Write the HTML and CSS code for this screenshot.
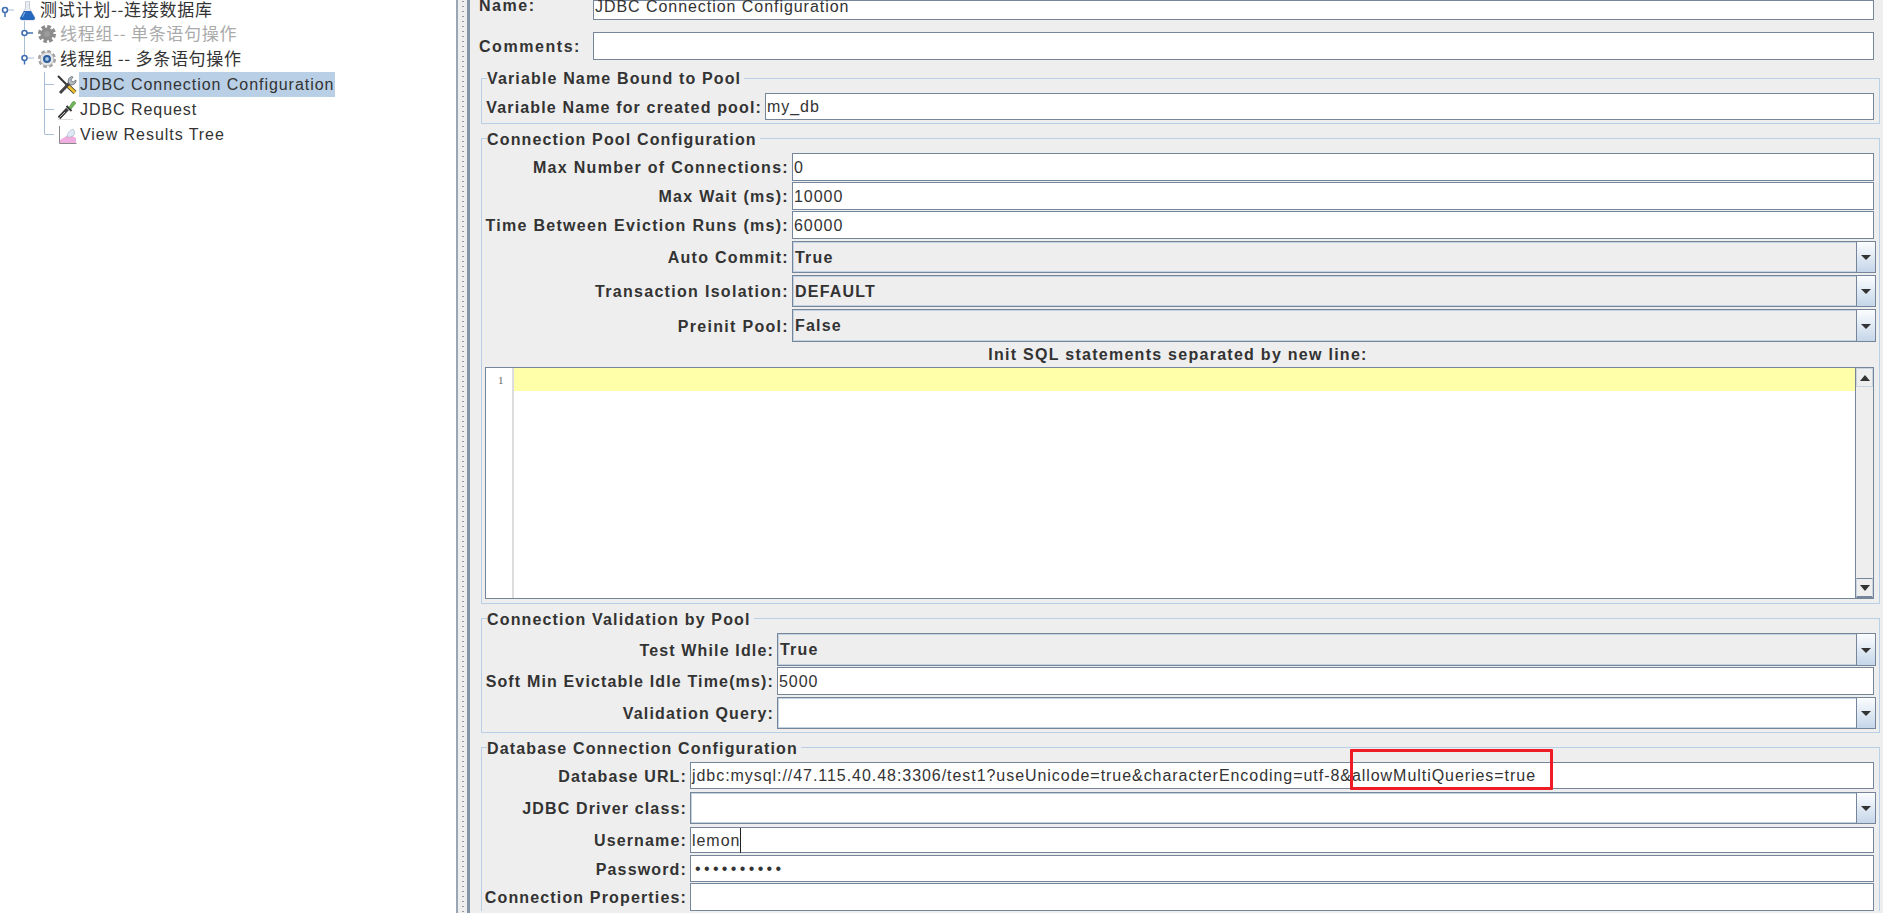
FILE: index.html
```html
<!DOCTYPE html>
<html lang="zh">
<head>
<meta charset="utf-8">
<title>JDBC Connection Configuration</title>
<link rel="stylesheet" href="styles.css">
</head>
<body>
<div class="app">
  <nav class="tree">
    <div class="node n0">
      <svg class="conn c0" viewBox="0 0 19 21"><circle cx="5" cy="10" r="2.5" fill="none" stroke="#3f6fb0" stroke-width="1.6"/><path d="M5 13v4" stroke="#3f6fb0" stroke-width="1.5"/><path d="M8 10h6" stroke="#a9bfd8"/></svg>
      <svg class="icon" viewBox="0 0 18 20"><path d="M6.500 0h4v7l5.500 10q0 2-2 2H3q-2 0-2-2l5.500-10z" fill="#e9edf2" stroke="#aab4c0" stroke-width=".6"/><path d="M5 10h7l4 7q0 2-2 2H3q-2 0-2-2z" fill="#2467bd"/><path d="M6 11l-2.500 5" stroke="#8fb9ea"/></svg>
      <span class="txt cjk">测试计划--连接数据库</span>
    </div>
    <div class="node n1">
      <svg class="conn c1" viewBox="0 0 37 25"><path d="M24.500 0v25" stroke="#a9bfd8"/><circle cx="24.500" cy="12" r="2.500" fill="#fff" stroke="#3f6fb0" stroke-width="1.600"/><path d="M27 12h6" stroke="#3f6fb0" stroke-width="1.500"/></svg>
      <svg class="icon gear" viewBox="0 0 20 20"><circle cx="10" cy="10" r="7" fill="none" stroke="#8c8c8c" stroke-width="4" stroke-dasharray="3.400 2.100"/><circle cx="10" cy="10" r="6.500" fill="#8c8c8c"/><circle cx="10" cy="10" r="3" fill="#9c9c9c"/></svg>
      <span class="txt cjk off">线程组-- 单条语句操作</span>
    </div>
    <div class="node n1">
      <svg class="conn c1" viewBox="0 0 37 25"><path d="M24.500 0v12" stroke="#a9bfd8"/><circle cx="24.500" cy="12" r="2.500" fill="#fff" stroke="#3f6fb0" stroke-width="1.600"/><path d="M24.500 14.500v4" stroke="#3f6fb0" stroke-width="1.500"/><path d="M28 12h6" stroke="#a9bfd8"/></svg>
      <svg class="icon gear" viewBox="0 0 20 20"><circle cx="10" cy="10" r="7" fill="none" stroke="#a4a4a4" stroke-width="4" stroke-dasharray="3.400 2.100"/><circle cx="10" cy="10" r="6.800" fill="#e6e6e6" stroke="#a4a4a4" stroke-width=".6"/><circle cx="10" cy="10" r="4" fill="#2c5f9e"/><circle cx="10" cy="10" r="1.900" fill="#a9c4e4"/></svg>
      <span class="txt cjk">线程组 -- 多条语句操作</span>
    </div>
    <div class="node n2 first">
      <svg class="conn c2" viewBox="0 0 57 25"><path d="M44.500 0v25M45 12.500h9" stroke="#a9bfd8"/></svg>
      <svg class="icon" viewBox="0 0 20 20"><path d="M1 1l9 9" stroke="#333" stroke-width="2"/><path d="M9.500 9.500l8.500 8" stroke="#333" stroke-width="4.400"/><path d="M9.500 9.500l8.500 8" stroke="#eec22c" stroke-width="2.800"/><path d="M3 18L13 7.500" stroke="#444" stroke-width="3"/><path d="M11.500 8.500q-1.500-5 3-7l1.500.5-2.200 3 2.200 2.200 3-2.200q.3 4.500-4.700 5z" fill="#b4bcc4" stroke="#4c5560" stroke-width=".7"/></svg>
      <span class="txt sel">JDBC Connection Configuration</span>
    </div>
    <div class="node n2">
      <svg class="conn c2" viewBox="0 0 57 25"><path d="M44.500 0v25M45 12.500h9" stroke="#a9bfd8"/></svg>
      <svg class="icon" viewBox="0 0 20 20"><path d="M2 18L10.500 9" stroke="#3a3a3a" stroke-width="3.600"/><path d="M2.500 17.500L8 12" stroke="#b9c2c8" stroke-width="1"/><path d="M9.500 6l5 5" stroke="#333" stroke-width="2"/><path d="M12 7.500l3.500-5.500q3-1.500 3 1.500l-4.500 5.500z" fill="#72b85a" stroke="#3e7a30" stroke-width=".6"/><path d="M1 19.500h15" stroke="#ddd"/></svg>
      <span class="txt">JDBC Request</span>
    </div>
    <div class="node n2">
      <svg class="conn c2" viewBox="0 0 57 25"><path d="M44.500 0v12.500M45 12.500h9" stroke="#a9bfd8"/></svg>
      <svg class="icon" viewBox="0 0 20 20"><path d="M2.500 1v17.500h17" fill="none" stroke="#8a8a8a"/><path d="M3 18v-3l5-3 4-3 7 4v5z" fill="#f0aee0"/><path d="M10 12q.5-6 6-8 3 3 1 6-3 3-7 2z" fill="#dfe8f5" stroke="#9ab" stroke-width=".5"/></svg>
      <span class="txt">View Results Tree</span>
    </div>
  </nav>

  <div class="splitter"></div>

  <main class="panel">
    <div class="top-row name-row">
      <label class="lbl top-lbl">Name:</label>
      <div class="field name-field">JDBC Connection Configuration</div>
    </div>
    <div class="top-row comments-row">
      <label class="lbl top-lbl">Comments:</label>
      <div class="field h28"></div>
    </div>

    <section class="box box1 s1">
      <h3 class="title">Variable Name Bound to Pool</h3>
      <div class="row"><label class="lbl">Variable Name for created pool:</label><div class="field h27">my_db</div></div>
    </section>

    <section class="box box2 s2">
      <h3 class="title">Connection Pool Configuration</h3>
      <div class="row gap1"><label class="lbl">Max Number of Connections:</label><div class="field h28">0</div></div>
      <div class="row gap1"><label class="lbl">Max Wait (ms):</label><div class="field h28">10000</div></div>
      <div class="row gap2"><label class="lbl">Time Between Eviction Runs (ms):</label><div class="field h28">60000</div></div>
      <div class="row gap2"><label class="lbl">Auto Commit:</label><div class="combo h32 ro"><span class="val">True</span><span class="arrow"></span></div></div>
      <div class="row gap2"><label class="lbl">Transaction Isolation:</label><div class="combo h32 ro"><span class="val">DEFAULT</span><span class="arrow"></span></div></div>
      <div class="row"><label class="lbl">Preinit Pool:</label><div class="combo h33 ro"><span class="val">False</span><span class="arrow"></span></div></div>
      <div class="init-lbl">Init SQL statements separated by new line:</div>
      <div class="editor">
        <div class="gutter">1</div>
        <div class="code"><div class="curline"></div></div>
        <div class="vbar">
          <span class="vbtn"><i class="tri up"></i></span>
          <span class="vtrack"></span>
          <span class="vbtn"><i class="tri"></i></span>
        </div>
      </div>
    </section>

    <section class="box box3 s3">
      <h3 class="title">Connection Validation by Pool</h3>
      <div class="row gap1"><label class="lbl">Test While Idle:</label><div class="combo h33 ro"><span class="val">True</span><span class="arrow"></span></div></div>
      <div class="row gap2"><label class="lbl">Soft Min Evictable Idle Time(ms):</label><div class="field h28">5000</div></div>
      <div class="row"><label class="lbl">Validation Query:</label><div class="combo h32"><span class="val"></span><span class="arrow"></span></div></div>
    </section>

    <section class="box box4 s4">
      <h3 class="title">Database Connection Configuration</h3>
      <div class="row gap3"><label class="lbl">Database URL:</label><div class="field h27">jdbc:mysql://47.115.40.48:3306/test1?useUnicode=true&amp;characterEncoding=utf-8&amp;allowMultiQueries=true</div></div>
      <div class="row gap3"><label class="lbl">JDBC Driver class:</label><div class="combo h32"><span class="val"></span><span class="arrow"></span></div></div>
      <div class="row gap2"><label class="lbl">Username:</label><div class="field h26"><span>lemon</span><i class="caret"></i></div></div>
      <div class="row gap1"><label class="lbl">Password:</label><div class="field h27 pw">••••••••••</div></div>
      <div class="row"><label class="lbl">Connection Properties:</label><div class="field h28"></div></div>
    </section>
  </main>
  <div class="redmark"></div>
</div>
</body>
</html>
```
FILE: styles.css
```css
* { box-sizing: border-box; }
html, body { margin: 0; padding: 0; background: #fff; }
body { font-family: "Liberation Sans", Arial, "Noto Sans CJK SC", sans-serif; color: #333; overflow: hidden; }
.app { position: relative; display: flex; width: 1883px; height: 913px; overflow: hidden; }

/* tree */
.tree { width: 456px; flex: none; background: #fff; font-size: 16px; letter-spacing: 0.95px; }
.node { display: flex; align-items: center; height: 25px; white-space: nowrap; }
.n0 { height: 21px; }
.first { margin-top: 1px; }
.conn { flex: none; height: 100%; }
.c0 { width: 19px; }
.c1 { width: 37px; }
.c2 { width: 57px; }
.icon { flex: none; width: 20px; height: 20px; margin-right: 2px; }
.n0 .icon { width: 18px; height: 20px; margin-right: 2px; }
.gear { width: 20px; margin-right: 2px; }
.txt { height: 25px; line-height: 25px; padding: 0 1px; }
.n0 .txt { height: 18px; line-height: 18px; align-self: flex-start; }
.n1 .txt { line-height: 23px; }
.cjk { font-family: "Noto Sans CJK SC", "Liberation Sans", sans-serif; letter-spacing: 0.72px; font-size: 17px; }
.off { color: #aaa; }
.sel { background: #b8cfe5; }

/* splitter */
.splitter { flex: none; width: 14px; border-left: 2px solid #9aa6b4; border-right: 3px solid #8595a8; background-color: #eee; background-image: radial-gradient(circle, #999 0.8px, transparent 1px); background-size: 4px 5px; background-position: center; background-repeat: repeat-y; }

/* form */
.panel { flex: 1; min-width: 0; background: #eee; padding: 0 9px 0 10px; font-size: 16px; }
.lbl { font-weight: 700; font-size: 16px; letter-spacing: 1.15px; white-space: nowrap; color: #333; }
.top-row { display: flex; align-items: center; }
.top-lbl { width: 113px; flex: none; margin-left: -1px; margin-right: 1px; letter-spacing: 1.55px; }
.name-row { height: 20px; margin-bottom: 12px; align-items: flex-start; }
.name-row .lbl { line-height: 12px; }
.comments-row { height: 28px; }
.comments-row .lbl { padding-top: 2px; }
.name-field { height: 20px; border-top: 0; line-height: 12px; align-items: flex-end; padding-bottom: 7px; }

.field { flex: 1; min-width: 0; display: flex; align-items: center; background: #fff; border: 1px solid #76869a; padding-left: 1px; padding-top: 1px; font-size: 16px; letter-spacing: 0.95px; white-space: nowrap; color: #333; }
.name-field { padding-top: 0; }
.h26 { height: 26px; }
.h27 { height: 27px; }
.h28 { height: 28px; }
.h32 { height: 32px; }
.h33 { height: 33px; }

.box { margin: 14px -6px 0 1px; border: 1px solid #b8cfe5; padding-right: 5px; }
.box1 { margin-top: 18px; padding-bottom: 3px; }
.box2 { padding-bottom: 4px; }
.box3 { padding-bottom: 3px; }
.box4 { border-bottom: 0; }
.title { margin: -10px 0 4px 5px; width: fit-content; height: 20px; padding: 0 3px 0 0; background: #eee; font-size: 16px; line-height: 22px; font-weight: 700; letter-spacing: 1.15px; color: #333; }
.box1 .title { line-height: 20px; }

.row { display: flex; align-items: center; }
.gap1 { margin-bottom: 1px; }
.gap2 { margin-bottom: 2px; }
.gap3 { margin-bottom: 3px; }
.row .lbl { flex: none; text-align: right; padding-right: 3px; padding-top: 2px; }
.s1 .lbl { width: 283px; }
.s2 .lbl { width: 310px; letter-spacing: 1.3px; }
.s3 .lbl { width: 295px; }
.s4 .lbl { width: 208px; }

.combo { flex: 1; min-width: 0; display: flex; margin-right: -2px; background: #fff; border: 1px solid #76869a; box-shadow: inset 0 0 0 1px #c3d2e3; }
.ro { background: #eee; }
.val { flex: 1; padding-left: 2px; font-weight: 700; font-size: 16px; letter-spacing: 1.2px; line-height: 32px; color: #333; }
.arrow { flex: none; position: relative; width: 19px; border-left: 1px solid #76869a; background: linear-gradient(#fbfdff, #c5d6e9); }
.arrow::after { content: ""; position: absolute; left: 4px; top: 50%; margin-top: -2px; border: 5px solid transparent; border-top: 5px solid #333; border-bottom: 0; }

.init-lbl { height: 25px; text-align: center; font-weight: 700; font-size: 16px; letter-spacing: 1.27px; line-height: 25px; }
.editor { display: flex; height: 232px; margin-left: 3px; background: #fff; border: 1px solid #76869a; }
.gutter { flex: none; width: 28px; border-right: 2px solid #ddd; padding: 5px 0 0 12px; font: 11px/14px "Liberation Serif", serif; color: #666; }
.code { flex: 1; min-width: 0; }
.curline { height: 23px; background: #ffffaa; }
.vbar { flex: none; width: 18px; display: flex; flex-direction: column; border-left: 1px solid #76869a; background: #eee; }
.vbtn { flex: none; height: 19px; display: flex; align-items: center; justify-content: center; background: #eee; border: 1px solid #c9d4e1; }
.vbtn:last-child { border-top: 1px solid #76869a; border-bottom: 2px solid #76869a; height: 20px; }
.vtrack { flex: 1; background: #eee; }
.tri { width: 0; height: 0; border: 5px solid transparent; border-top: 6px solid #333; border-bottom: 0; }
.tri.up { border-top: 0; border-bottom: 6px solid #333; }

.caret { display: block; width: 1px; height: 25px; background: #222; }
.pw { letter-spacing: 3.35px; font-size: 16px; padding-left: 4px; }

/* red annotation drawn over the screenshot */
.redmark { position: absolute; left: 1350px; top: 749px; width: 203px; height: 41px; border: 3px solid #ee1c25; border-radius: 1px; }
```
